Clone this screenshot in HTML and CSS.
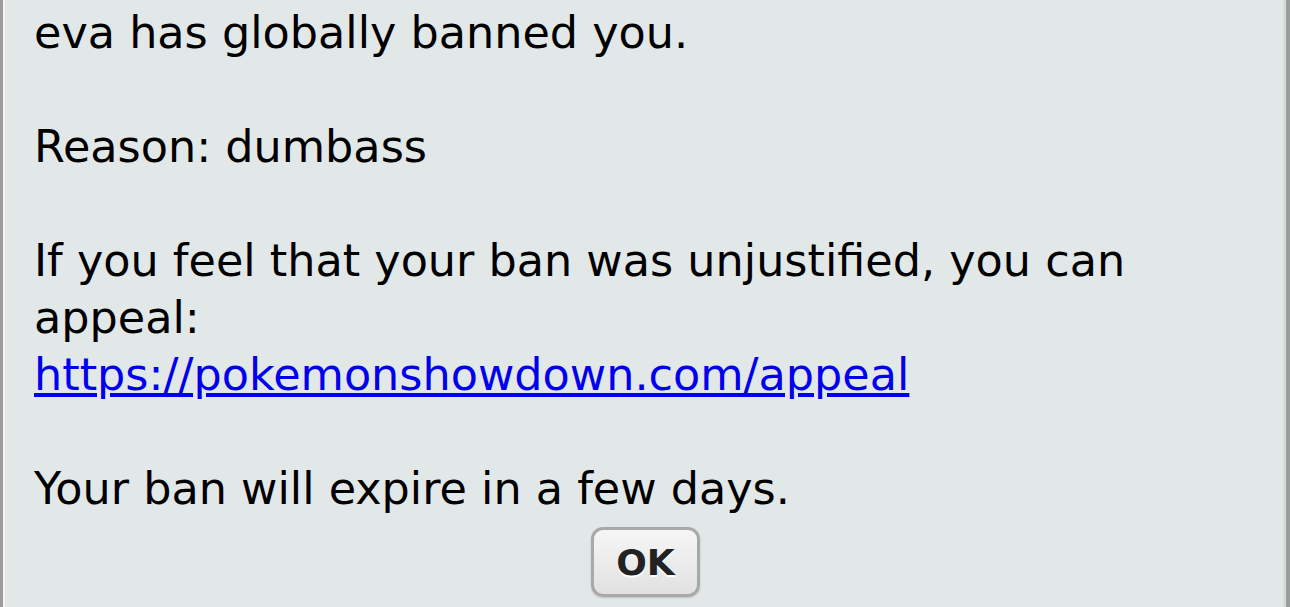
FILE: index.html
```html
<!DOCTYPE html>
<html lang="en">
<head>
    <meta charset="UTF-8">
    <meta name="viewport" content="width=device-width, initial-scale=1.0">
    <title>Pokémon Showdown</title>
    <link rel="stylesheet" href="styles.css">
</head>
<body>
    <div class="popup">
        <p class="popup-text">eva has globally banned you.<br><br>Reason: dumbass<br><br>If you feel that your ban was unjustified, you can appeal:<br><a href="https://pokemonshowdown.com/appeal">https://pokemonshowdown.com/appeal</a><br><br>Your ban will expire in a few days.</p>
        <div class="popup-buttons">
            <button class="btn-ok">OK</button>
        </div>
    </div>
</body>
</html>
```

FILE: styles.css
```css
html, body {
    margin: 0;
    height: 100%;
    overflow: hidden;
}
body {
    background-color: #e2e7e7;
    font-family: 'DejaVu Sans', Verdana, sans-serif;
}
.popup {
    box-sizing: border-box;
    height: 100%;
    background-color: #e2e7e7;
    border-left: 3px solid #9c9c9c;
    border-right: 4px solid #9c9c9c;
    box-shadow: inset 2px 0 #f4f6f6, inset -3px 0 #d6dada;
    padding: 4px 40px 0 31px;
}
.popup-text {
    margin: 0;
    font-size: 44.5px;
    line-height: 57px;
    color: #000;
}
.popup-text a {
    color: #0000ee;
}
.popup-buttons {
    text-align: center;
    margin-top: 10px;
}
.btn-ok {
    width: 109px;
    height: 70px;
    font-family: 'DejaVu Sans', Verdana, sans-serif;
    font-size: 36px;
    font-weight: bold;
    color: #222;
    text-shadow: 0 2px 0 #fff;
    background: linear-gradient(#f6f6f6, #e1e1e1);
    border: 3px solid #a9a9a9;
    border-radius: 12px;
    box-shadow: 0 1px 2px rgba(0, 0, 0, 0.15);
    padding: 0;
    margin-left: 11px;
}
```
